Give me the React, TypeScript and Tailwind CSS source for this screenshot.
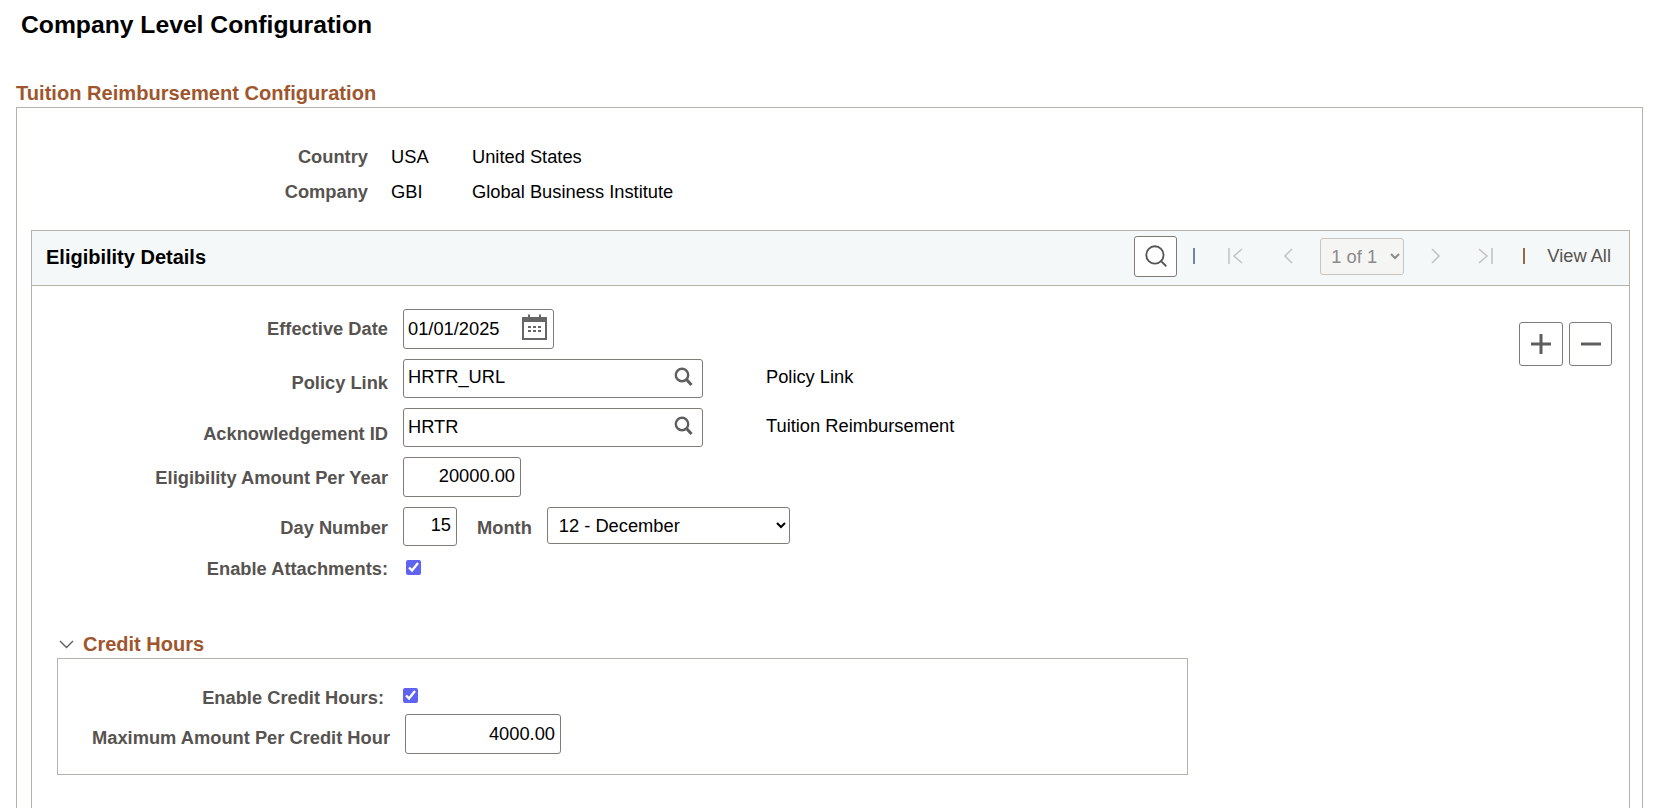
import { Search } from "lucide-react";

const fontArial = "font-['Liberation_Sans',Arial,sans-serif]";

const labelClass = "text-[18.3px] leading-5 font-bold text-[#565350] text-right";
const inputClass =
  "border border-[#7f7b77] rounded-[3px] bg-white text-[18.3px] text-black pl-[4px] pr-[5px] outline-none";

const CalendarIcon = () => (
  <svg width="25" height="26" viewBox="0 0 25 26" fill="none">
    <rect x="1" y="4" width="23" height="21" stroke="#666" strokeWidth="2" />
    <rect x="1" y="4" width="23" height="4" fill="#666" />
    <path d="M7 0.5V5M18 0.5V5" stroke="#666" strokeWidth="2" />
    <path
      d="M6 13h3M11 13h3M16 13h3M6 17h3M11 17h3M16 17h3"
      stroke="#666"
      strokeWidth="2"
    />
  </svg>
);

const LookupIcon = () => (
  <svg width="19" height="19" viewBox="0 0 19 19" fill="none">
    <circle cx="8" cy="8" r="6.2" stroke="#5e5e5e" strokeWidth="2.4" />
    <path d="M12.5 12.5L17.5 18" stroke="#5e5e5e" strokeWidth="3" />
  </svg>
);

const PagerIcon = ({ d, width }: { d: string; width: number }) => (
  <svg width={width} height="16" viewBox={`0 0 ${width} 16`} fill="none">
    <path d={d} stroke="#c4c4c4" strokeWidth="1.6" />
  </svg>
);

const App = () => {
  return (
    <div
      className={`${fontArial} w-[1671px] h-[808px] overflow-hidden bg-white text-black`}
    >
      {/* Page title */}
      <h1 className="h-[82px] pl-[21px] pt-[10px] text-[24.7px] leading-[30px] font-bold">
        Company Level Configuration
      </h1>

      <h2 className="ml-[16px] h-[25px] text-[20.1px] leading-[22px] font-bold text-[#a0562d]">
        Tuition Reimbursement Configuration
      </h2>

      {/* Outer group box */}
      <div className="ml-[16px] w-[1627px] h-[701px] border border-b-0 border-[#b5b2ab] pt-[39px]">
        <div className="flex flex-col gap-[15px]">
          <div className="flex items-center h-5 text-[18.3px] leading-5">
            <span className={`${labelClass} w-[351px]`}>Country</span>
            <span className="ml-[23px] w-[81px]">USA</span>
            <span>United States</span>
          </div>
          <div className="flex items-center h-5 text-[18.3px] leading-5">
            <span className={`${labelClass} w-[351px]`}>Company</span>
            <span className="ml-[23px] w-[81px]">GBI</span>
            <span>Global Business Institute</span>
          </div>
        </div>

        {/* Eligibility panel */}
        <div className="ml-[14px] mt-[28px] w-[1599px] h-[600px] border border-b-0 border-[#b5b2ab]">
          <div className="h-[55px] bg-[#f5f8f9] border-b border-[#b5b2ab] flex items-center pl-[14px]">
            <span className="mb-[2px] text-[20px] font-bold text-black">
              Eligibility Details
            </span>
            <div className="ml-auto mb-[4px] flex items-center">
              <button className="w-[43px] h-[41px] mr-[16px] rounded-[3px] border border-[#7f7b77] bg-white flex items-center justify-center">
                <Search size={26} strokeWidth={1.7} color="#555" />
              </button>
              <span className="w-[2px] h-[16px] bg-[#6f86a3] mr-[33px]" />
              <div className="mr-[40px]">
                <PagerIcon width={15} d="M1 0v16M14 1L6 8l8 7" />
              </div>
              <div className="mr-[27px]">
                <PagerIcon width={10} d="M9 1L2 8l7 7" />
              </div>
              <select
                disabled
                className="w-[84px] h-[37px] rounded-[3px] border border-[#c9c6c2] bg-[#f5f5f4] text-[#8b8b8b] text-[18.3px] pl-[6px]"
              >
                <option>1 of 1</option>
              </select>
              <div className="ml-[27px]">
                <PagerIcon width={10} d="M1 1l7 7-7 7" />
              </div>
              <div className="ml-[37px]">
                <PagerIcon width={15} d="M1 1l8 7-8 7M14 0v16" />
              </div>
              <span className="ml-[30px] w-[2px] h-[16px] bg-[#8f6a4d]" />
              <span className="ml-[22px] mr-[18px] text-[18.3px] text-[#56534f]">
                View All
              </span>
            </div>
          </div>

          {/* Panel body */}
          <div className="relative pt-[23px]">
            <div className="absolute right-[17px] top-[36px] flex gap-[6px]">
              <button className="w-[44px] h-[44px] rounded-[3px] border border-[#7f7b77] bg-white flex items-center justify-center">
                <svg width="22" height="22" viewBox="0 0 22 22">
                  <path d="M11 1v20M1 11h20" stroke="#5e5e5e" strokeWidth="3" />
                </svg>
              </button>
              <button className="w-[43px] h-[44px] rounded-[3px] border border-[#7f7b77] bg-white flex items-center justify-center">
                <svg width="22" height="22" viewBox="0 0 22 22">
                  <path d="M1 11h20" stroke="#5e5e5e" strokeWidth="3" />
                </svg>
              </button>
            </div>

            <div className="flex flex-col gap-[10px]">
              <div className="flex items-start">
                <span className={`${labelClass} w-[356px] mt-[10px]`}>
                  Effective Date
                </span>
                <div className="relative ml-[15px] w-[151px] h-[40px]">
                  <input
                    readOnly
                    value="01/01/2025"
                    className={`${inputClass} w-full h-full`}
                  />
                  <div className="absolute right-[7px] top-[5px]">
                    <CalendarIcon />
                  </div>
                </div>
              </div>

              <div className="flex items-start">
                <span className={`${labelClass} w-[356px] mt-[14px]`}>
                  Policy Link
                </span>
                <div className="relative ml-[15px] w-[300px] h-[39px]">
                  <input
                    readOnly
                    value="HRTR_URL"
                    className={`${inputClass} w-full h-full pb-[3px]`}
                  />
                  <div className="absolute right-[10px] top-[8px]">
                    <LookupIcon />
                  </div>
                </div>
                <span className="ml-[63px] mt-[8px] text-[18.3px] leading-5">
                  Policy Link
                </span>
              </div>

              <div className="flex items-start">
                <span className={`${labelClass} w-[356px] mt-[16px]`}>
                  Acknowledgement ID
                </span>
                <div className="relative ml-[15px] w-[300px] h-[39px]">
                  <input
                    readOnly
                    value="HRTR"
                    className={`${inputClass} w-full h-full pb-[2px]`}
                  />
                  <div className="absolute right-[10px] top-[8px]">
                    <LookupIcon />
                  </div>
                </div>
                <span className="ml-[63px] mt-[8px] text-[18.3px] leading-5">
                  Tuition Reimbursement
                </span>
              </div>

              <div className="flex items-start">
                <span className={`${labelClass} w-[356px] mt-[11px]`}>
                  Eligibility Amount Per Year
                </span>
                <input
                  readOnly
                  value="20000.00"
                  className={`${inputClass} ml-[15px] w-[118px] h-[40px] text-right pb-[2px]`}
                />
              </div>

              <div className="flex items-start">
                <span className={`${labelClass} w-[356px] mt-[11px]`}>
                  Day Number
                </span>
                <input
                  readOnly
                  value="15"
                  className={`${inputClass} ml-[15px] w-[54px] h-[39px] text-right pb-[3px]`}
                />
                <span className={`${labelClass} ml-[20px] mt-[11px]`}>
                  Month
                </span>
                <select className="ml-[15px] w-[243px] h-[37px] rounded-[3px] border border-[#7f7b77] bg-white text-[18.3px] pl-[7px] outline-none">
                  <option>12 - December</option>
                </select>
              </div>

              <div className="flex items-start">
                <span className={`${labelClass} w-[356px] mt-[3px]`}>
                  Enable Attachments:
                </span>
                <input
                  type="checkbox"
                  readOnly
                  checked
                  className="ml-[18px] mt-[4px] m-0 w-[15px] h-[15px] accent-[#5f63ef]"
                />
              </div>
            </div>

            {/* Credit Hours section */}
            <div className="mt-[51px] ml-[25px]">
              <div className="flex items-center h-[28px]">
                <svg width="15" height="9" viewBox="0 0 15 9" className="ml-[2px]">
                  <path d="M1 1l6.5 6.5L14 1" stroke="#5e5e5e" strokeWidth="1.4" fill="none" />
                </svg>
                <span className="ml-[9px] text-[20px] leading-[22px] font-bold text-[#a0562d]">
                  Credit Hours
                </span>
              </div>
              <div className="w-[1131px] h-[117px] border border-[#b5b2ab] pt-[28px]">
                <div className="flex items-start">
                  <span className={`${labelClass} w-[326px] mt-[1px]`}>
                    Enable Credit Hours:
                  </span>
                  <input
                    type="checkbox"
                    readOnly
                    checked
                    className="ml-[19px] mt-[1px] m-0 w-[15px] h-[15px] accent-[#5f63ef]"
                  />
                </div>
                <div className="flex items-start mt-[6px]">
                  <span className={`${labelClass} w-[332px] mt-[14px]`}>
                    Maximum Amount Per Credit Hour
                  </span>
                  <input
                    readOnly
                    value="4000.00"
                    className={`${inputClass} ml-[15px] w-[156px] h-[40px] text-right`}
                  />
                </div>
              </div>
            </div>
          </div>
        </div>
      </div>
    </div>
  );
};

export default App;
